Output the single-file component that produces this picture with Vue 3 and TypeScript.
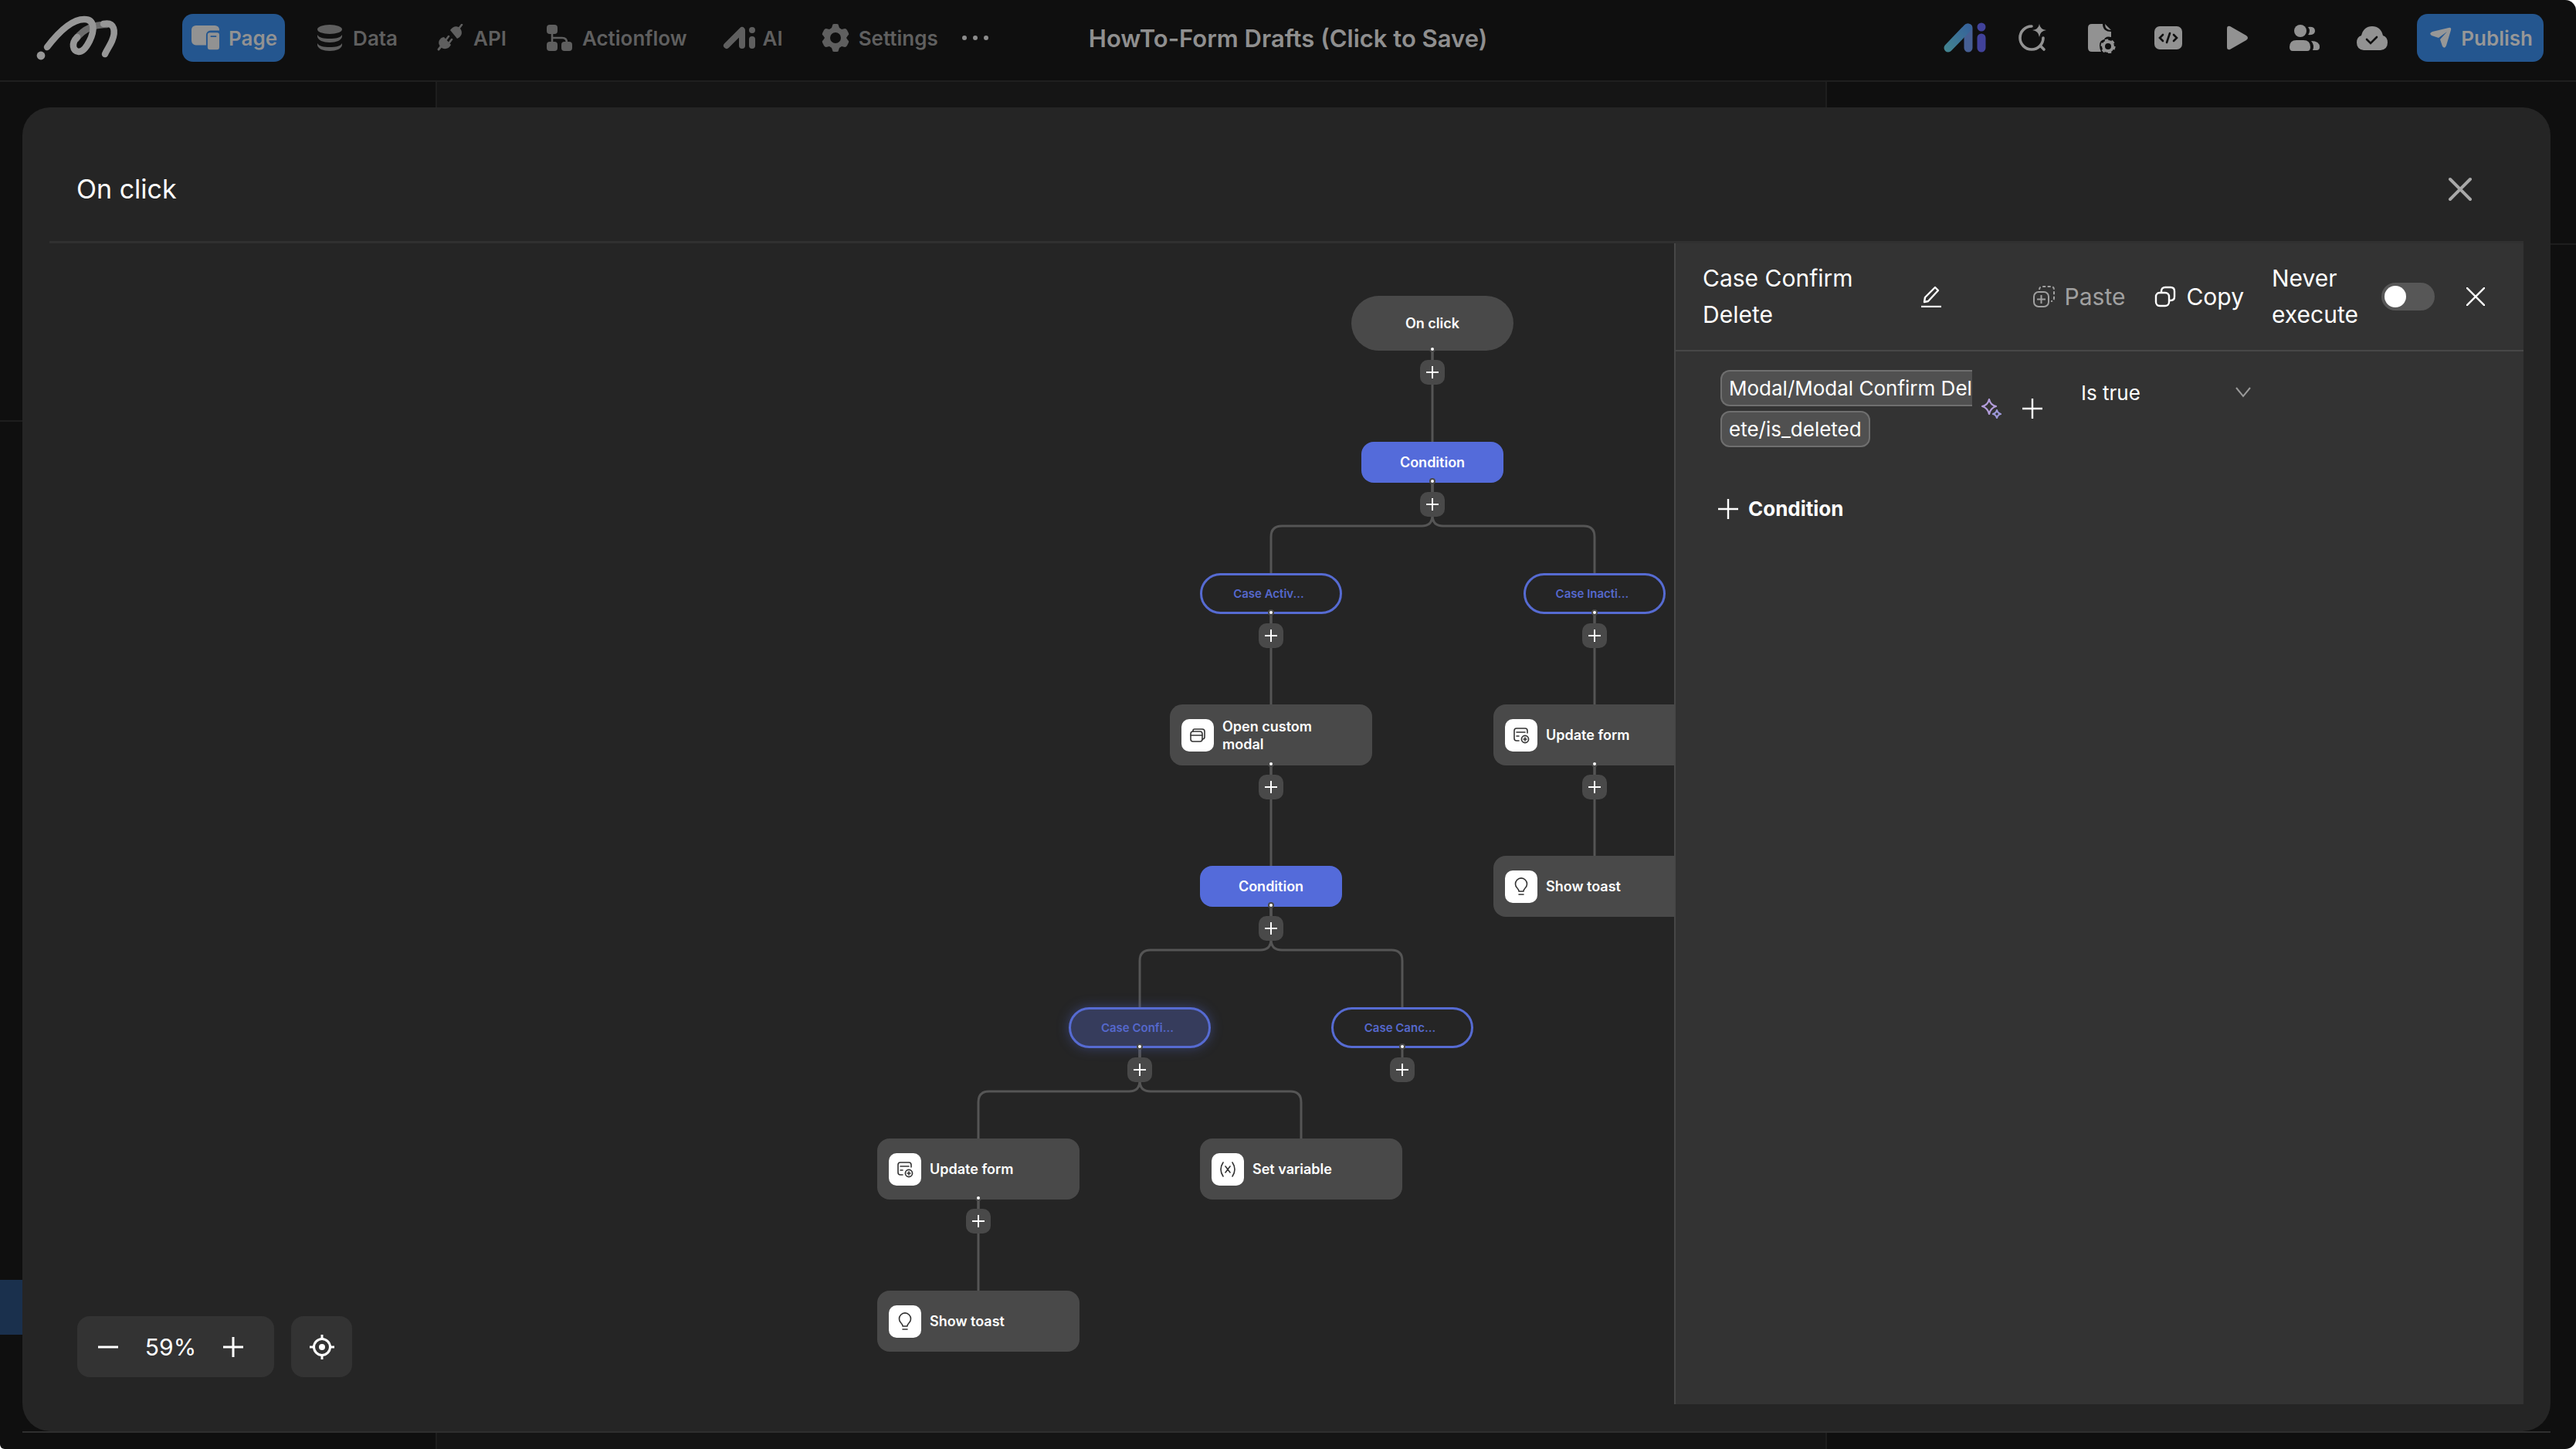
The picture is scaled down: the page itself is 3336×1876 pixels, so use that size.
<script setup lang="ts">
import { ref } from 'vue'

type NodeKind = 'start' | 'condition' | 'case' | 'action'
type Glyph = 'modal' | 'form' | 'toast' | 'variable'

interface FlowNode {
  id: number
  kind: NodeKind
  label: string
  /** horizontal centre on the canvas */
  x: number
  /** top edge on the canvas */
  y: number
  glyph?: Glyph
  selected?: boolean
  leaf?: boolean
}

const nodeHeight: Record<NodeKind, number> = { start: 71, condition: 53, case: 53, action: 79 }

const nodes: FlowNode[] = [
  { id: 1, kind: 'start', label: 'On click', x: 1791, y: 68 },
  { id: 2, kind: 'condition', label: 'Condition', x: 1791, y: 257 },
  { id: 3, kind: 'case', label: 'Case Activ...', x: 1582, y: 427 },
  { id: 4, kind: 'case', label: 'Case Inacti...', x: 2001, y: 427 },
  { id: 5, kind: 'action', label: 'Open custom modal', x: 1582, y: 597, glyph: 'modal' },
  { id: 6, kind: 'action', label: 'Update form', x: 2001, y: 597, glyph: 'form' },
  { id: 7, kind: 'condition', label: 'Condition', x: 1582, y: 806 },
  { id: 8, kind: 'action', label: 'Show toast', x: 2001, y: 793, glyph: 'toast', leaf: true },
  { id: 9, kind: 'case', label: 'Case Confi...', x: 1412, y: 989, selected: true },
  { id: 10, kind: 'case', label: 'Case Canc...', x: 1752, y: 989 },
  { id: 11, kind: 'action', label: 'Update form', x: 1203, y: 1159, glyph: 'form' },
  { id: 12, kind: 'action', label: 'Set variable', x: 1621, y: 1159, glyph: 'variable', leaf: true },
  { id: 13, kind: 'action', label: 'Show toast', x: 1203, y: 1356, glyph: 'toast', leaf: true },
]

const links: [number, number][] = [
  [1, 2], [2, 3], [2, 4], [3, 5], [4, 6], [5, 7], [6, 8],
  [7, 9], [7, 10], [9, 11], [9, 12], [11, 13],
]

const bottomOf = (n: FlowNode) => n.y + nodeHeight[n.kind]

function linkPath([from, to]: [number, number]): string {
  const a = nodes.find((n) => n.id === from)!
  const b = nodes.find((n) => n.id === to)!
  const start = bottomOf(a)
  if (a.x === b.x) return `M${a.x} ${start}V${b.y}`
  const bend = start + 56
  const r = 14
  const dir = b.x < a.x ? -1 : 1
  return `M${a.x} ${start}V${bend - r}Q${a.x} ${bend} ${a.x + dir * r} ${bend}` +
    `H${b.x - dir * r}Q${b.x} ${bend} ${b.x} ${bend + r}V${b.y}`
}

const parents = nodes.filter((n) => !n.leaf)
const neverExecute = ref(false)
const operator = ref('Is true')
</script>

<template>
  <div class="app">
    <header class="topbar">
      <div class="lead">
        <svg class="logo" viewBox="45 18 110 64" fill="none" stroke="#979797" stroke-width="8.5" stroke-linecap="round">
          <path d="M99 51C108 38 124 32 138 33" stroke="#6c6c6c" />
          <path d="M61 62C74 45 92 26 109 26C124 26 122 42 116 54C111 64 107 68 102 68C94 67 92 57 100 49" />
          <path d="M134 32C149 29 150 42 145 54C142 61 138 66 136 71" />
          <circle cx="53" cy="73" r="5.4" fill="#979797" stroke="none" />
        </svg>
        <nav class="nav">
          <button class="nav-item active">
            <svg viewBox="0 0 38 36" fill="currentColor">
              <path d="M6 1h26a6 6 0 0 1 6 6v1H26a6 6 0 0 0-6 6v14H6a6 6 0 0 1-6-6V7a6 6 0 0 1 6-6z" />
              <path fill-rule="evenodd" d="M25 11h10a3 3 0 0 1 3 3v17a3 3 0 0 1-3 3H25a3 3 0 0 1-3-3V14a3 3 0 0 1 3-3zm1 4v2h8v-2z" />
            </svg>
            Page
          </button>
          <button class="nav-item">
            <svg viewBox="0 0 36 36" fill="currentColor">
              <ellipse cx="18" cy="7" rx="16" ry="6" />
              <path d="M2 14c2 4 8 5 16 5s14-1 16-5v2c0 5-8 8-16 8S2 21 2 16z" />
              <path d="M2 25c2 4 8 5 16 5s14-1 16-5v2c0 5-8 8-16 8S2 32 2 27z" />
            </svg>
            Data
          </button>
          <button class="nav-item">
            <svg viewBox="0 0 36 36" fill="currentColor">
              <path d="M3 33l4-5" stroke="currentColor" stroke-width="3" stroke-linecap="round" />
              <path d="M10 17l9 10c-3 6-10 7-14 2s-1-11 5-12z" />
              <path d="M13 20l3-4M17 24l3-4M30 5l3-4" stroke="currentColor" stroke-width="2.6" stroke-linecap="round" />
              <path d="M18 8c4-6 10-6 13-2s3 10-4 13z" />
            </svg>
            API
          </button>
          <button class="nav-item">
            <svg viewBox="0 0 36 36" fill="currentColor">
              <rect x="2" y="1" width="14" height="12" rx="4" />
              <rect x="2" y="23" width="14" height="12" rx="4" />
              <rect x="21" y="23" width="14" height="12" rx="4" />
              <path d="M9 11v14M9 18h13q6 0 6 6" fill="none" stroke="currentColor" stroke-width="2.6" />
            </svg>
            Actionflow
          </button>
          <button class="nav-item">
            <svg viewBox="0 0 36 36" fill="none" stroke="currentColor" stroke-width="8" stroke-linecap="round" stroke-linejoin="round" overflow="visible">
              <path d="M1 28L21 8V28M34 20v8M34 8v.1" />
            </svg>
            AI
          </button>
          <button class="nav-item">
            <svg viewBox="0 0 36 36" fill="currentColor">
              <path fill-rule="evenodd" d="M14 2q0-2 2-2h4q2 0 2 2l1 3 3 2 4-1q2 0 3 2l2 4q1 2-1 3l-2 3 2 3q2 1 1 3l-2 4q-1 2-3 2l-4-1-3 2-1 3q0 2-2 2h-4q-2 0-2-2l-1-3-3-2-4 1q-2 0-3-2l-2-4q-1-2 1-3l2-3-2-3q-2-1-1-3l2-4q1-2 3-2l4 1 3-2zM18 11a7 7 0 1 0 0 14a7 7 0 1 0 0-14z" />
            </svg>
            Settings
          </button>
        </nav>
        <button class="dots" aria-label="More">
          <svg viewBox="0 0 36 8" fill="#8c8c8c"><circle cx="4" cy="4" r="3" /><circle cx="18" cy="4" r="3" /><circle cx="32" cy="4" r="3" /></svg>
        </button>
      </div>

      <h1 class="project">HowTo-Form Drafts (Click to Save)</h1>

      <div class="tools">
        <button class="tool" aria-label="AI assistant">
          <svg viewBox="0 0 56 40" class="wide" fill="none" stroke-width="11" stroke-linecap="round" stroke-linejoin="round">
            <defs>
              <linearGradient id="ai" x1="0" y1="34" x2="32" y2="4" gradientUnits="userSpaceOnUse">
                <stop offset="0" stop-color="#43858f" /><stop offset="1" stop-color="#36639a" />
              </linearGradient>
            </defs>
            <path d="M33 7v26" stroke="#465f93" />
            <path d="M7 33L32 7" stroke="url(#ai)" />
            <path d="M50 20v13M50 6v.1" stroke="#41429a" />
          </svg>
        </button>
        <button class="tool" aria-label="Search">
          <svg viewBox="0 0 40 40" fill="none" stroke="currentColor" stroke-width="3.6" stroke-linecap="round">
            <path d="M19 5A15 15 0 1 0 34 20M30 30l5 5" />
            <path d="M29 2q1 7 9 8q-8 1-9 9q-1-8-9-9q8-1 9-8z" fill="currentColor" stroke="none" />
          </svg>
        </button>
        <button class="tool" aria-label="Page settings">
          <svg viewBox="0 0 40 40" fill="currentColor">
            <path d="M9 2h14q0 10 11 10v7q-7-2-9 3-6 1-6 8 0 4 2 8H9q-5 0-5-5V7q0-5 5-5z" />
            <path d="M26 2l8 8q-8 0-8-8z" />
            <circle cx="30" cy="31" r="6" fill="none" stroke="currentColor" stroke-width="4" />
            <circle cx="30" cy="31" r="8.4" fill="none" stroke="currentColor" stroke-width="2.4" stroke-dasharray="4.4 4.4" />
          </svg>
        </button>
        <button class="tool" aria-label="Code">
          <svg viewBox="0 0 40 40">
            <rect x="2" y="5" width="36" height="30" rx="7" fill="currentColor" />
            <path d="M13 16l-4 4 4 4M27 16l4 4-4 4M22 14l-4 12" fill="none" stroke="#101010" stroke-width="2.6" stroke-linecap="round" />
          </svg>
        </button>
        <button class="tool" aria-label="Preview">
          <svg viewBox="0 0 40 40" fill="currentColor"><path d="M8 8q0-4 4-3l21 12q4 3 0 6L12 35q-4 1-4-3z" /></svg>
        </button>
        <button class="tool" aria-label="Collaborators">
          <svg viewBox="0 0 40 40" fill="currentColor">
            <circle cx="15" cy="11" r="8" />
            <path d="M1 32q0-9 9-9h9q9 0 9 9 0 5-4 5H5q-4 0-4-5z" />
            <path d="M25 6q9-1 9 5t-9 5q4-5 0-10zM29 24q11 0 11 8 0 4-4 4h-5q3-6-2-12z" />
          </svg>
        </button>
        <button class="tool" aria-label="Saved to cloud">
          <svg viewBox="0 0 40 40">
            <path d="M9 36q-9-1-9-10 0-7 6-9Q9 5 20 5t14 12q6 2 6 9 0 9-9 10z" fill="currentColor" />
            <path d="M13 22l5 5 8-8" fill="none" stroke="#101010" stroke-width="2.6" stroke-linecap="round" />
          </svg>
        </button>
        <button class="publish">
          <svg viewBox="0 0 28 28" fill="currentColor">
            <path d="M24 1q4-1 3 3l-6 20q-2 5-5 1l-3-9L22 6 11 14l-9-3q-4-3 1-5z" />
          </svg>
          Publish
        </button>
      </div>
    </header>

    <div class="workspace">
      <aside class="side left"><div class="side-row"></div></aside>
      <div class="stage"></div>
      <aside class="side right"></aside>
    </div>

    <section class="modal" role="dialog" aria-labelledby="dialog-title">
      <header class="modal-head">
        <h2 id="dialog-title">On click</h2>
        <button class="plain close" aria-label="Close dialog">
          <svg viewBox="0 0 32 32" fill="none" stroke="#a8a8a8" stroke-width="4" stroke-linecap="round"><path d="M3 3l26 26M29 3L3 29" /></svg>
        </button>
      </header>

      <div class="modal-body">
        <div class="canvas">
          <svg class="links" fill="none" stroke="#555" stroke-width="3">
            <path v-for="link in links" :key="link.join('-')" :d="linkPath(link)" />
            <path v-for="n in parents" :key="n.id" :d="`M${n.x} ${bottomOf(n)}v20`" />
          </svg>

          <div
            v-for="n in nodes"
            :key="n.id"
            class="node"
            :class="[n.kind, { selected: n.selected }]"
            :style="{ left: n.x + 'px', top: n.y + 'px', height: nodeHeight[n.kind] + 'px' }"
          >
            <span v-if="n.glyph" class="glyph">
              <svg viewBox="0 0 24 24" fill="none" stroke="#333" stroke-width="1.6" stroke-linecap="round" stroke-linejoin="round">
                <template v-if="n.glyph === 'modal'">
                  <rect x="3" y="7" width="15" height="13" rx="3" />
                  <path d="M3 12h15M6 7V6q0-2 2-2h10q3 0 3 3v7q0 3-3 3" />
                </template>
                <template v-else-if="n.glyph === 'form'">
                  <path d="M9 19H6q-3 0-3-3V6q0-3 3-3h11q3 0 3 3v3M6 8h11M6 13h3" />
                  <circle cx="17" cy="17" r="4.6" />
                  <path d="M17 15v4M15 17h4" />
                </template>
                <template v-else-if="n.glyph === 'toast'">
                  <path d="M9 18q0-2-2-4A7.5 7.5 0 1 1 17 14Q15 16 15 18zM9 22h6" />
                </template>
                <template v-else>
                  <path d="M6 3q-6 9 0 18M18 3q6 9 0 18M9 8l6 8M15 8l-6 8" />
                </template>
              </svg>
            </span>
            <span class="label">{{ n.label }}</span>
          </div>

          <template v-for="n in parents" :key="'p' + n.id">
            <i class="port" :style="{ left: n.x + 'px', top: bottomOf(n) - 2 + 'px' }"></i>
            <button class="add" aria-label="Add step" :style="{ left: n.x + 'px', top: bottomOf(n) + 12 + 'px' }">
              <svg viewBox="0 0 16 16" stroke="#fff" stroke-width="2"><path d="M8 0v16M0 8h16" /></svg>
            </button>
          </template>

          <div class="zoom">
            <div class="zoom-box">
              <button class="plain" aria-label="Zoom out">
                <svg viewBox="0 0 26 26" stroke="#fff" stroke-width="3"><path d="M0 13h26" /></svg>
              </button>
              <span class="percent">59%</span>
              <button class="plain" aria-label="Zoom in">
                <svg viewBox="0 0 26 26" stroke="#fff" stroke-width="3"><path d="M0 13h26M13 0v26" /></svg>
              </button>
            </div>
            <button class="locate" aria-label="Centre the flow">
              <svg viewBox="0 0 32 32" fill="none" stroke="#fff" stroke-width="3">
                <circle cx="16" cy="16" r="10.5" /><path d="M16 0v6M16 26v6M0 16h6M26 16h6" />
                <circle cx="16" cy="16" r="4" fill="#fff" stroke="none" />
              </svg>
            </button>
          </div>
        </div>

        <aside class="panel">
          <header class="panel-head">
            <h3>Case Confirm Delete</h3>
            <button class="plain" aria-label="Rename">
              <svg viewBox="0 0 28 28" fill="none" stroke="#fff" stroke-width="2.4" stroke-linejoin="round">
                <path d="M1 27h26" /><path d="M5 21l1-6L19 2l4 4L10 20z" />
              </svg>
            </button>
            <div class="panel-tools">
              <button class="plain muted" disabled>
                <svg viewBox="0 0 28 28" fill="none" stroke="currentColor" stroke-width="2">
                  <rect x="1" y="8" width="19" height="19" rx="6" /><path d="M10.5 12v11M5 17.5h11" />
                  <path d="M8 5q0-4 4-4h11q4 0 4 4v11q0 4-4 4" stroke-dasharray="4 2.5" />
                </svg>
                Paste
              </button>
              <button class="plain copy">
                <svg viewBox="0 0 28 28" fill="none" stroke="currentColor" stroke-width="2.4">
                  <rect x="2" y="9" width="17" height="17" rx="5" />
                  <path d="M9 9V7q0-5 5-5h7q5 0 5 5v7q0 5-5 5h-2" />
                </svg>
                Copy
              </button>
              <label class="never" for="never">Never execute</label>
              <input id="never" v-model="neverExecute" class="switch" type="checkbox" />
              <button class="plain" aria-label="Close panel">
                <svg class="x" viewBox="0 0 24 24" stroke="#fff" stroke-width="2.4"><path d="M0 0l24 24M24 0L0 24" /></svg>
              </button>
            </div>
          </header>

          <div class="rule">
            <div class="chips">
              <span class="chip open">Modal/Modal Confirm Del</span>
              <span class="chip">ete/is_deleted</span>
            </div>
            <button class="plain spark" aria-label="Suggest a value">
              <svg viewBox="0 0 26 26" fill="none" stroke="#b39ddb" stroke-width="2.2" stroke-linejoin="round">
                <path d="M10 1q2 8 9 9q-7 2-9 10q-2-8-9-10q7-1 9-9z" />
                <path d="M20 15q1 4 5 5q-4 1-5 5q-1-4-5-5q4-1 5-5z" stroke="#9c97d8" />
              </svg>
            </button>
            <button class="plain" aria-label="Add value">
              <svg viewBox="0 0 26 26" stroke="#fff" stroke-width="2.4"><path d="M0 13h26M13 0v26" /></svg>
            </button>
            <div class="operator">
              <select v-model="operator" aria-label="Operator">
                <option>Is true</option>
                <option>Is false</option>
              </select>
              <svg viewBox="0 0 20 14" fill="none" stroke="#9a9a9a" stroke-width="2"><path d="M1 1l9 11L19 1" /></svg>
            </div>
          </div>

          <button class="plain add-condition">
            <svg viewBox="0 0 26 26" stroke="#fff" stroke-width="2.4"><path d="M0 13h26M13 0v26" /></svg>
            Condition
          </button>
        </aside>
      </div>
    </section>
  </div>
</template>

<style>
html,
body {
  margin: 0;
  background: #fff;
}
</style>

<style scoped>
* {
  box-sizing: border-box;
}

.app {
  position: relative;
  display: flex;
  flex-direction: column;
  min-height: 100vh;
  overflow: hidden;
  border-radius: 0 14px 14px 6px;
  background: #0f0f0f;
  color: #fff;
  font-family: Inter, 'Noto Sans', sans-serif;
}

button,
select {
  font: inherit;
  color: inherit;
  border: 0;
  padding: 0;
  background: none;
}

svg {
  display: block;
  flex: none;
}

h1,
h2,
h3 {
  margin: 0;
  font-weight: 400;
}

/* top bar */
.topbar {
  display: grid;
  grid-template-columns: 1fr auto 1fr;
  align-items: center;
  height: 106px;
  padding: 0 42px 6px;
  border-bottom: 2px solid #1f1f1f;
}

.lead,
.nav,
.tools {
  display: flex;
  align-items: center;
}

.logo {
  width: 110px;
  height: 64px;
  margin: 0 81px 0 3px;
}

.nav {
  gap: 28px;
}

.nav-item {
  display: flex;
  align-items: center;
  gap: 12px;
  height: 62px;
  padding: 0 10px 0 12px;
  border-radius: 14px;
  color: #5f5f5f;
  font-size: 26px;
  font-weight: 600;
}

.nav-item svg {
  width: 36px;
  height: 36px;
}

.nav-item.active {
  background: #24568f;
  color: #929292;
}

.dots {
  margin-left: 20px;
}

.dots svg {
  width: 36px;
  height: 8px;
}

.project {
  color: #8f8f8f;
  font-size: 31px;
  font-weight: 600;
}

.tools {
  justify-content: flex-end;
  gap: 28px;
}

.tool {
  display: grid;
  place-items: center;
  width: 60px;
  height: 60px;
  color: #929292;
}

.tool svg {
  width: 40px;
  height: 40px;
}

.tool svg.wide {
  width: 56px;
}

.publish {
  display: flex;
  align-items: center;
  gap: 12px;
  height: 62px;
  padding: 0 14px 0 17px;
  border-radius: 14px;
  background: #24568f;
  color: #979797;
  font-size: 26px;
  font-weight: 600;
}

.publish svg {
  width: 28px;
  height: 28px;
}

/* dimmed editor behind the dialog */
.workspace {
  display: flex;
  flex: 1;
}

.side {
  display: flex;
  flex-direction: column;
}

.left {
  width: 566px;
  border-right: 2px solid #1e1e1e;
}

.side-row {
  height: 440px;
  border-bottom: 2px solid #1e1e1e;
}

.left::after {
  content: '';
  height: 71px;
  margin-top: 1111px;
  background: #1a304d;
}

.stage {
  flex: 1;
  background: #151515;
}

.right {
  width: 972px;
  border-left: 2px solid #1e1e1e;
}

.right::before {
  content: '';
  height: 209px;
  border-bottom: 2px solid #1e1e1e;
}

/* dialog */
.modal {
  position: absolute;
  inset: 139px 33px 23px 29px;
  display: flex;
  flex-direction: column;
  padding: 0 35px 35px;
  border-radius: 36px;
  background: #252525;
}

.modal::after {
  content: '';
  position: absolute;
  inset: 100% 0 auto;
  height: 2px;
  background: #2f2f2f;
}

.modal-head {
  display: flex;
  align-items: center;
  justify-content: space-between;
  height: 176px;
  padding: 38px 66px 0 35px;
  border-bottom: 3px solid #303030;
}

.modal-head h2 {
  font-size: 34px;
}

.close svg {
  width: 32px;
  height: 32px;
}

.modal-body {
  display: flex;
  flex: 1;
  min-height: 0;
}

/* flow canvas */
.canvas {
  position: relative;
  flex: 1;
  min-width: 0;
  overflow: hidden;
}

.links {
  position: absolute;
  inset: 0;
  width: 100%;
  height: 100%;
}

.node {
  position: absolute;
  display: flex;
  align-items: center;
  justify-content: center;
  width: 184px;
  transform: translateX(-50%);
  font-size: 18px;
  font-weight: 600;
  line-height: 23px;
}

.start {
  width: 210px;
  border-radius: 36px;
  background: #494949;
}

.condition {
  border-radius: 16px;
  background: #546bda;
}

.case {
  padding-right: 6px;
  border: 3px solid #566bd2;
  border-radius: 27px;
  background: #252525;
  color: #5568cc;
  font-size: 15px;
}

.selected {
  background: #363c5c;
  box-shadow: 0 0 16px rgba(84, 107, 218, 0.4);
}

.action {
  justify-content: flex-start;
  gap: 11px;
  width: 262px;
  padding: 0 60px 0 15px;
  border-radius: 16px;
  background: #494949;
}

.glyph {
  display: grid;
  flex: none;
  place-items: center;
  width: 42px;
  height: 42px;
  border-radius: 10px;
  background: #fff;
}

.glyph svg {
  width: 24px;
  height: 24px;
}

.port {
  position: absolute;
  width: 8px;
  height: 8px;
  border: 2px solid #494949;
  border-radius: 50%;
  background: #fff;
  transform: translate(-50%, -50%);
}

.add {
  position: absolute;
  display: grid;
  place-items: center;
  width: 32px;
  height: 32px;
  border-radius: 10px;
  background: #494949;
  transform: translateX(-50%);
}

.add svg {
  width: 16px;
  height: 16px;
}

.zoom {
  position: absolute;
  left: 36px;
  bottom: 35px;
  display: flex;
  gap: 22px;
}

.zoom-box,
.locate {
  display: flex;
  align-items: center;
  justify-content: center;
  height: 79px;
  border-radius: 16px;
  background: #333;
}

.zoom-box {
  width: 255px;
  justify-content: space-between;
  padding: 0 40px 0 27px;
}

.zoom-box svg {
  width: 26px;
  height: 26px;
}

.percent {
  font-size: 30px;
}

.locate {
  width: 79px;
}

.locate svg {
  width: 32px;
  height: 32px;
}

/* condition panel */
.panel {
  width: 1100px;
  border-left: 2px solid #474747;
  background: #333;
}

.plain {
  display: flex;
  align-items: center;
  gap: 13px;
}

.panel-head {
  display: flex;
  align-items: center;
  height: 140px;
  padding: 0 50px 0 35px;
  border-bottom: 2px solid #474747;
  font-size: 30px;
  line-height: 47px;
}

.panel-head h3 {
  width: 282px;
  padding-right: 70px;
  font-size: 30px;
}

.panel-head svg {
  width: 28px;
  height: 28px;
}

.panel-head svg.x {
  width: 24px;
  height: 24px;
}

.panel-tools {
  display: flex;
  align-items: center;
  margin-left: auto;
}

.muted {
  color: #a0a0a0;
}

.copy {
  margin: 0 36px 0 38px;
}

.never {
  width: 142px;
}

.switch {
  appearance: none;
  display: flex;
  align-items: center;
  width: 69px;
  height: 36px;
  margin: 0 41px 0 0;
  padding: 0 4px;
  border-radius: 18px;
  background: #575757;
}

.switch::before {
  content: '';
  width: 28px;
  height: 28px;
  border-radius: 50%;
  background: #fff;
}

.rule {
  display: flex;
  align-items: center;
  padding: 24px 58px 0;
  font-size: 26px;
}

.chips {
  display: flex;
  flex-direction: column;
  align-items: flex-start;
  gap: 6px;
  width: 326px;
}

.chip {
  height: 47px;
  padding: 0 9px;
  border: 2px solid #6f6f6f;
  border-radius: 12px;
  background: #505050;
  line-height: 43px;
  white-space: nowrap;
}

.chip.open {
  padding-right: 0;
  border-right: 0;
  border-radius: 12px 0 0 12px;
}

.spark {
  margin: 0 27px 0 12px;
}

.rule .plain svg,
.add-condition svg {
  width: 26px;
  height: 26px;
}

.operator {
  display: flex;
  align-items: center;
  align-self: flex-start;
  width: 220px;
  height: 58px;
  margin-left: 50px;
}

.operator select {
  appearance: none;
  flex: 1;
}

.operator svg {
  width: 20px;
  height: 14px;
}

.add-condition {
  margin: 64px 0 0 55px;
  font-size: 26px;
  font-weight: 700;
}
</style>
